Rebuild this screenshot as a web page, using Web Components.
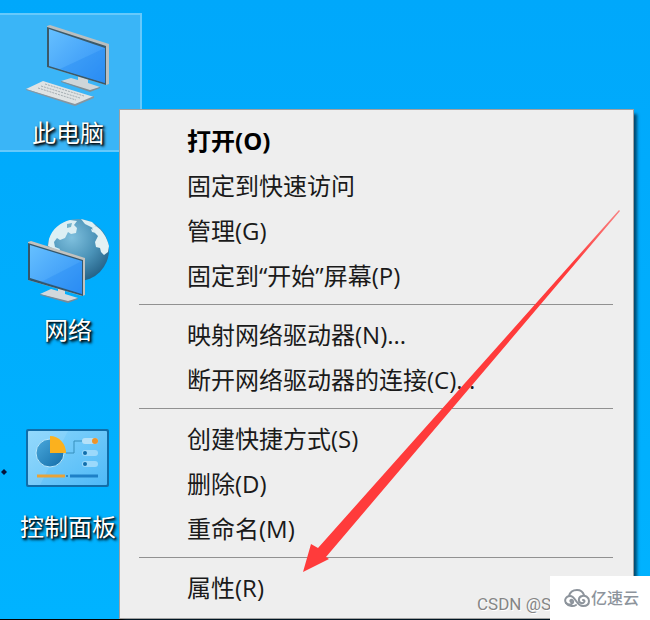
<!DOCTYPE html>
<html lang="zh-CN">
<head>
<meta charset="utf-8">
<meta name="viewport" content="width=device-width, initial-scale=1">
<title>桌面</title>
<style>
  html, body {
    height: 100%;
    margin: 0;
  }
  body {
    font-family: "Open Sans", "Noto Sans CJK SC", sans-serif;
    overflow: hidden;
  }
</style>
</head>
<body>
<win-desktop>
  <desktop-icon label="此电脑" selected>
    <svg viewBox="0 0 84 88" aria-hidden="true">
      <defs>
        <linearGradient id="pc-screen" x1="0" y1="0" x2="1" y2="1">
          <stop offset="0" stop-color="#66c0ff"/>
          <stop offset="1" stop-color="#2f8ff5"/>
        </linearGradient>
      </defs>
      <path d="M35 60 45 57 52 59V54L62 57V62L74 66 64 70Z" fill="#cfd6d9"/>
      <path d="M35 60 64 69 74 66V67L64 71 35 61Z" fill="#7e8e96"/>
      <path d="M21 5 24 4 83 23V63L80 64 21 46Z" fill="#b9bfc0"/>
      <path d="M21 6 80 25V64L21 46Z" fill="#3b5968"/>
      <path d="M23 8 79 27V62L23 45Z" fill="url(#pc-screen)"/>
      <path d="M79 27V62L34 48Z" fill="#1f86f2" opacity=".35"/>
      <path d="M0 68 17 60 68 76 49 84Z" fill="#dfe3e4"/>
      <path d="M0 68 49 83 68 75V77L49 85 0 69Z" fill="#8796a0"/>
      <path d="M19 63 58 75M15 65 54 77M12 67 50 79" stroke="#a3acb1" stroke-width="1" stroke-dasharray="2 1" fill="none"/>
    </svg>
  </desktop-icon>
  <desktop-icon label="网络">
    <svg viewBox="0 0 84 88" aria-hidden="true">
      <defs>
        <radialGradient id="net-globe" cx=".4" cy=".3" r=".8">
          <stop offset="0" stop-color="#7fc0de"/>
          <stop offset=".5" stop-color="#4b93b8"/>
          <stop offset="1" stop-color="#1c577d"/>
        </radialGradient>
        <linearGradient id="net-screen" x1="0" y1="0" x2="1" y2="1">
          <stop offset="0" stop-color="#66c0ff"/>
          <stop offset="1" stop-color="#2f8ff5"/>
        </linearGradient>
      </defs>
      <circle cx="52" cy="32" r="31" fill="url(#net-globe)"/>
      <path d="M23 21C26 11 35 4 44 2L51 3 48 7 51 10 50 15 45 16 42 14 39 20 34 22 31 20 28 24 29 29 34 31 33 33 26 30 22 28Z" fill="#dceff4"/>
      <path d="M41 6 46 5 45 9 41 10Z" fill="#73b3cb"/>
      <path d="M55 1 66 4 70 8 67 10 63 8 59 6Z" fill="#dceff4"/>
      <path d="M66 10 70 8C76 12 81 19 83 28L82 34 78 37 75 34 74 30 70 29 69 24 72 18 69 15Z" fill="#e2f1f4"/>
      <path d="M65 11 69 12 70 15 66 14Z" fill="#dceff4"/>
      <path d="M14 76 25 71 32 73V69L39 71V76L52 80 42 84Z" fill="#d3d8dc"/>
      <path d="M14 76 42 83 52 80V81L42 85 14 77Z" fill="#778b99"/>
      <path d="M2 24 5 23 59 40V77L56 78 2 62Z" fill="#c2c2bf"/>
      <path d="M2 25 57 42V78L2 62Z" fill="#34566b"/>
      <path d="M4 27 56 43V76L4 60Z" fill="url(#net-screen)"/>
      <path d="M56 43V76L15 64Z" fill="#1f86f2" opacity=".3"/>
    </svg>
  </desktop-icon>
  <desktop-icon label="控制面板">
    <svg viewBox="0 0 84 88" aria-hidden="true">
      <defs>
        <linearGradient id="cp-panel" x1="0" y1="0" x2="1" y2="1">
          <stop offset="0" stop-color="#87d5fc"/>
          <stop offset="1" stop-color="#4fb9f7"/>
        </linearGradient>
        <linearGradient id="cp-pie" x1="0" y1="0" x2="1" y2="1">
          <stop offset="0" stop-color="#4aa9dc"/>
          <stop offset="1" stop-color="#136da9"/>
        </linearGradient>
      </defs>
      <rect y="14" width="83" height="58" rx="2" fill="#116da8"/>
      <rect x="2" y="16" width="79" height="54" rx="1" fill="url(#cp-panel)"/>
      <path d="M2 16H42L14 70H2Z" fill="#fff" opacity=".1"/>
      <circle cx="24" cy="38" r="14" fill="url(#cp-pie)" stroke="#b9e7fc"/>
      <path d="M24 38V21A16 17 0 0 1 40 38Z" fill="#fbb11e"/>
      <path d="M40 38H48V26H56" fill="none" stroke="#368fbc"/>
      <rect x="56" y="23" width="16" height="6" rx="3" fill="#b5e1f8"/>
      <rect x="56" y="35" width="16" height="6" rx="3" fill="#9bd9fb"/>
      <rect x="56" y="46" width="16" height="6" rx="3" fill="#9bd9fb"/>
      <circle cx="69" cy="26" r="3" fill="#ed942b"/>
      <circle cx="59" cy="38" r="2" fill="#106eac"/>
      <circle cx="59" cy="49" r="2" fill="#106eac"/>
      <path d="M11 61H39" stroke="#e8a338" stroke-width="3"/>
      <circle cx="41" cy="61" r="1" fill="#1d79b9"/>
      <path d="M44 61H72" stroke="#1e80c7" stroke-width="3"/>
    </svg>
  </desktop-icon>

  <context-menu slot="overlay">
    <menu-item strong>打开(O)</menu-item>
    <menu-item>固定到快速访问</menu-item>
    <menu-item>管理(G)</menu-item>
    <menu-item>固定到“开始”屏幕(P)</menu-item>
    <menu-divider></menu-divider>
    <menu-item>映射网络驱动器(N)...</menu-item>
    <menu-item>断开网络驱动器的连接(C)...</menu-item>
    <menu-divider></menu-divider>
    <menu-item>创建快捷方式(S)</menu-item>
    <menu-item>删除(D)</menu-item>
    <menu-item>重命名(M)</menu-item>
    <menu-divider></menu-divider>
    <menu-item>属性(R)</menu-item>
  </context-menu>
  <pointer-arrow slot="overlay"></pointer-arrow>
  <source-mark slot="overlay">CSDN @S</source-mark>
</win-desktop>

<script>
// full window background, with a column of icons and an overlay layer
class WinDesktop extends HTMLElement {
  constructor() {
    super();
    this.attachShadow({ mode: 'open' });
    this.shadowRoot.innerHTML = `
      <style>
        :host {
          display: block;
          position: relative;
          box-sizing: border-box;
          min-height: 100%;
          padding-top: 13px;
          background: linear-gradient(#00a8fb, #00b3ff);
          border-bottom: 1px solid #000;
        }

        .icons {
          display: flex;
          flex-direction: column;
          align-items: flex-start;
          gap: 58px;
        }

        .cursor {
          position: absolute;
          left: 1px;
          top: 469px;
          width: 6px;
          height: 6px;
        }
      </style>
      <div class="icons"><slot></slot></div>
      <svg class="cursor" viewBox="0 0 6 6" aria-hidden="true">
        <path d="M3 0 6 3 3 6 0 3Z" fill="#04143c"/>
      </svg>
      <slot name="overlay"></slot>
    `;
  }
}

// one desktop shortcut, the picture comes in through the slot
class DesktopIcon extends HTMLElement {
  constructor() {
    super();
    this.attachShadow({ mode: 'open' });
    this.shadowRoot.innerHTML = `
      <style>
        :host {
          display: block;
        }

        button {
          display: flex;
          flex-direction: column;
          align-items: center;
          gap: 10px;
          box-sizing: border-box;
          width: 142px;
          height: 139px;
          padding: 6px 4px 0 0;
          border: 2px solid transparent;
          border-left: none;
          background: none;
          font: inherit;
          font-size: 24px;
          line-height: 28px;
          color: #fff;
          text-shadow: 1px 1px 2px #000, 2px 2px 3px #000;
        }

        :host([selected]) button {
          background-color: #3ab5f7;
          border-color: #66c9fb;
        }

        ::slotted(svg) {
          display: block;
          width: 84px;
          height: 88px;
        }
      </style>
      <button type="button">
        <slot></slot>
        <span id="label"></span>
      </button>
    `;
  }

  connectedCallback() {
    this.shadowRoot.querySelector('#label').textContent = this.getAttribute('label');
  }
}

class ContextMenu extends HTMLElement {
  constructor() {
    super();
    this.attachShadow({ mode: 'open' });
    this.shadowRoot.innerHTML = `
      <style>
        :host {
          display: block;
          position: absolute;
          left: 119px;
          right: 16px;
          top: 109px;
          box-sizing: border-box;
          padding: 8px 0;
          border: 1px solid #a0a0a0;
          background-color: #eee;
          box-shadow: 4px 4px 3px -1px rgba(0, 30, 50, 0.7);
        }
      </style>
      <div role="menu"><slot></slot></div>
    `;
  }
}

class MenuItem extends HTMLElement {
  constructor() {
    super();
    this.attachShadow({ mode: 'open' });
    this.shadowRoot.innerHTML = `
      <style>
        :host {
          display: block;
        }

        button {
          display: block;
          width: 100%;
          height: 45px;
          padding: 0 20px 0 67px;
          border: none;
          background: none;
          font: inherit;
          font-size: 24px;
          line-height: 44px;
          color: #1a1a1a;
          text-align: left;
          white-space: nowrap;
        }

        :host([strong]) button {
          font-weight: bold;
          color: #000;
        }

        button:hover {
          background-color: #fff;
        }
      </style>
      <button type="button" role="menuitem"><slot></slot></button>
    `;
  }
}

class MenuDivider extends HTMLElement {
  constructor() {
    super();
    this.attachShadow({ mode: 'open' });
    this.shadowRoot.innerHTML = `
      <style>
        :host {
          display: flow-root;
        }

        hr {
          margin: 6px 20px 7px 19px;
          border: none;
          border-top: 1px solid #919191;
        }
      </style>
      <hr>
    `;
  }
}

// red arrow drawn over the menu, pointing at the last item
class PointerArrow extends HTMLElement {
  constructor() {
    super();
    this.attachShadow({ mode: 'open' });
    this.shadowRoot.innerHTML = `
      <style>
        :host {
          display: block;
          position: absolute;
          left: 300px;
          top: 210px;
          width: 320px;
          height: 364px;
          pointer-events: none;
        }

        svg {
          display: block;
        }
      </style>
      <svg width="320" height="364" viewBox="0 0 320 364" aria-hidden="true">
        <defs>
          <linearGradient id="fade" x1="1" y1="0" x2="0" y2="1">
            <stop offset="0" stop-color="#ff3b3b" stop-opacity=".6"/>
            <stop offset=".15" stop-color="#ff3b3b"/>
          </linearGradient>
        </defs>
        <path d="M3 362 11 334 18 338 319 0 320 1 26 347 29 349Z" fill="url(#fade)"/>
      </svg>
    `;
  }
}

// source line with the site logo over its end
class SourceMark extends HTMLElement {
  constructor() {
    super();
    this.attachShadow({ mode: 'open' });
    this.shadowRoot.innerHTML = `
      <style>
        :host {
          display: flex;
          align-items: flex-end;
          position: absolute;
          right: 0;
          bottom: -1px;
        }

        .source {
          width: 73px;
          overflow: hidden;
          font-family: Roboto, "Open Sans", sans-serif;
          font-size: 17px;
          line-height: 32px;
          color: #858585;
          text-shadow: 1px 1px 0 #fff;
          white-space: nowrap;
        }

        .logo {
          display: flex;
          align-items: center;
          gap: 1px;
          box-sizing: border-box;
          width: 100px;
          height: 44px;
          padding-left: 14px;
          background-color: #fff;
          font-size: 16px;
          font-weight: 500;
          line-height: 20px;
          color: #8d949c;
          text-decoration: none;
        }
      </style>
      <span class="source"><slot></slot></span>
      <a class="logo" href="#">
        <svg width="26" height="20" viewBox="0 0 26 20" fill="none" stroke="#8d949c" stroke-width="2" stroke-linecap="round" aria-hidden="true">
          <path d="M5 8C6 4 9 2 13 2C17 2 19 4 20 7"/>
          <path d="M7 14C5 12 8 11 9 13C10 16 5 18 2 15C0 12 2 8 6 8C12 8 12 18 19 18C23 18 25 16 25 13C25 9 21 7 18 8C14 9 14 14 17 15C20 16 22 12 19 12"/>
          <path d="M2 15C4 18 9 19 12 17"/>
        </svg>
        <span>亿速云</span>
      </a>
    `;
  }
}

customElements.define('win-desktop', WinDesktop);
customElements.define('desktop-icon', DesktopIcon);
customElements.define('context-menu', ContextMenu);
customElements.define('menu-item', MenuItem);
customElements.define('menu-divider', MenuDivider);
customElements.define('pointer-arrow', PointerArrow);
customElements.define('source-mark', SourceMark);
</script>
</body>
</html>
